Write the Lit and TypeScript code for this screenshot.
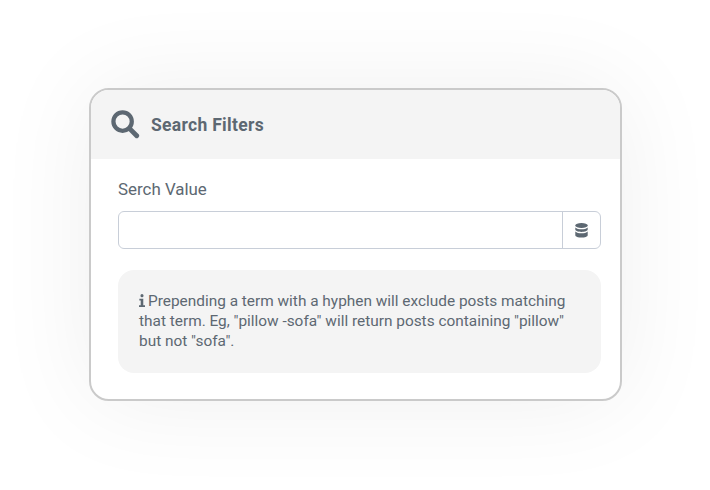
import { LitElement, html, css } from "lit";
import { customElement } from "lit/decorators.js";

@customElement("app-root")
export class AppRoot extends LitElement {
  static styles = css`
    :host {
      display: block;
      width: 710px;
      height: 490px;
      background: #fff;
      font-family: Roboto, "Liberation Sans", sans-serif;
      color: #5d6872;
    }
    .page {
      width: 710px;
      height: 490px;
      box-sizing: border-box;
      padding: 88px 0 0 89px;
      overflow: hidden;
    }
    .card {
      width: 533px;
      height: 313px;
      box-sizing: border-box;
      border: 2px solid #cacaca;
      border-radius: 20px;
      background: #fff;
      box-shadow: 0 0 100px rgba(0, 0, 0, 0.065);
      overflow: hidden;
    }
    .head {
      height: 69px;
      background: #f4f4f4;
      display: flex;
      align-items: center;
      padding-left: 20px;
      gap: 11px;
    }
    .head svg { width: 29px; height: 29px; display: block; }
    .head h2 {
      margin: 0;
      padding-top: 1px;
      font-size: 17.5px;
      font-weight: 700;
      letter-spacing: 0.3px;
    }
    .body { padding: 20px 19px 0 27px; }
    .label { font-size: 16.9px; line-height: 20px; margin-bottom: 12px; }
    .group {
      height: 38px;
      box-sizing: border-box;
      border: 1px solid #c8ced8;
      border-radius: 6px;
      display: flex;
      background: #fff;
    }
    .field { flex: 1; }
    .addon {
      width: 38px;
      box-sizing: border-box;
      border-left: 1px solid #c8ced8;
      display: flex;
      align-items: center;
      justify-content: center;
    }
    .addon svg { width: 13px; height: 15px; display: block; }
    .note {
      margin-top: 21px;
      height: 103px;
      box-sizing: border-box;
      background: #f4f4f4;
      border-radius: 16px;
      padding: 21px 20px 21px 21px;
      font-size: 15.4px;
      line-height: 20px;
    }
    .note svg { width: 6px; height: 13px; vertical-align: -1px; margin-right: 3px; }
  `;

  render() {
    return html`<div class="page">
      <div class="card">
        <div class="head">
          <svg viewBox="0 0 30 30" aria-hidden="true">
            <circle cx="12" cy="12" r="9.5" fill="none" stroke="#5d6872" stroke-width="4.4"></circle>
            <path d="M19 19l7.6 7.6" stroke="#5d6872" stroke-width="5" stroke-linecap="round"></path>
          </svg>
          <h2>Search Filters</h2>
        </div>
        <div class="body">
          <div class="label">Serch Value</div>
          <div class="group">
            <div class="field"></div>
            <div class="addon">
              <svg viewBox="0 0 13 15" aria-hidden="true" fill="#5d6872">
                <ellipse cx="6.5" cy="2.6" rx="6.2" ry="2.5"></ellipse>
                <path d="M.3 4.4C1.5 5.8 4 6.2 6.5 6.2s5-.4 6.2-1.8v2.2c0 1.3-2.8 2.4-6.2 2.4S.3 7.900.3 6.600z"></path>
                <path d="M.3 8.400c1.200 1.400 3.700 1.800 6.200 1.800s5-.4 6.200-1.800v3.800c0 1.400-2.800 2.400-6.200 2.400S.3 13.600.3 12.200z"></path>
              </svg>
            </div>
          </div>
          <div class="note">
            <svg viewBox="0 0 7 14" preserveAspectRatio="none" aria-hidden="true" fill="#5d6872">
              <circle cx="3.500" cy="1.800" r="1.800"></circle>
              <path d="M.4 5h4.600v7H7v2H0v-2h2V7H.4z"></path>
            </svg>Prepending a term with a hyphen will exclude posts matching that term. Eg, "pillow -sofa" will return posts containing "pillow" but not "sofa".
          </div>
        </div>
      </div>
    </div>`;
  }
}
